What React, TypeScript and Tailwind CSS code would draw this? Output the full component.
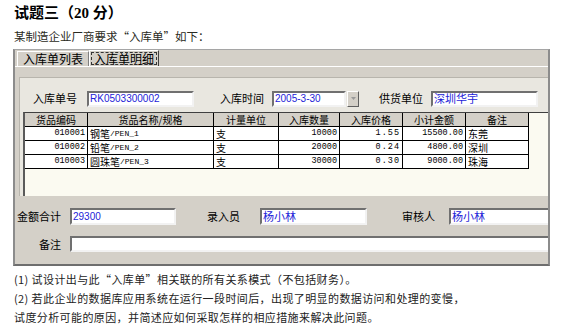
const sans = "font-['Liberation_Sans','Noto_Sans_CJK_SC',sans-serif]";
const cjk = "font-['Noto_Sans_CJK_SC',sans-serif]";
const mono = "font-['Liberation_Mono','Noto_Sans_CJK_SC',monospace]";

const sunken =
  "bg-white border-2 border-t-[#707070] border-l-[#707070] border-r-[#f2f2f2] border-b-[#f2f2f2]";

type Row = {
  code: string;
  nameCn: string;
  nameEn: string;
  unit: string;
  qty: string;
  price: string;
  sum: string;
  note: string;
};

const rows: Row[] = [
  { code: "010001", nameCn: "钢笔", nameEn: "/PEN_1", unit: "支", qty: "10000", price: "1.55", sum: "15500.00", note: "东莞" },
  { code: "010002", nameCn: "铅笔", nameEn: "/PEN_2", unit: "支", qty: "20000", price: "0.24", sum: "4800.00", note: "深圳" },
  { code: "010003", nameCn: "圆珠笔", nameEn: "/PEN_3", unit: "支", qty: "30000", price: "0.30", sum: "9000.00", note: "珠海" },
];

const headers = ["货品编码", "货品名称/规格", "计量单位", "入库数量", "入库价格", "小计金额", "备注"];

function Field({ w, value, cn }: { w: string; value: string; cn?: boolean }) {
  return (
    <div className={`${sunken} ${w} h-[16px] shrink-0 flex items-center px-[1px] overflow-hidden`}>
      <span
        className={`${cn ? `${cjk} text-[11px]` : `${sans} text-[10px]`} leading-none text-[#2323d8] whitespace-nowrap`}
      >
        {value}
      </span>
    </div>
  );
}

export default function App() {
  return (
    <div className={`w-[572px] h-[336px] bg-white overflow-hidden text-black whitespace-nowrap ${cjk}`}>
      {/* heading */}
      <h1 className="pl-[14px] pt-[4px] text-[15px] leading-[18px] font-bold font-['Liberation_Serif','Noto_Sans_CJK_SC',serif]">
        试题三（20 分）
      </h1>
      <p className="pl-[14px] mt-[8px] text-[11.5px] leading-[13px] text-[#2a2a22]">
        某制造企业厂商要求“入库单”如下：
      </p>

      {/* window */}
      <div className="ml-[13px] mt-[6px] w-[537px] h-[217px] bg-[#d4d0c8] border-t border-t-[#a5a5a5] border-x-2 border-x-[#8c8c8c] border-b-2 border-b-[#6e6e6e] overflow-hidden flex flex-col">
        {/* tabs */}
        <div className="h-[16px] flex items-end pl-[2px] shrink-0">
          <div className="h-[15px] shrink-0 px-[5px] border-t border-l border-white border-r border-r-[#808080] text-[12px] leading-[14px] flex items-center">
            入库单列表
          </div>
          <div className="h-[16px] shrink-0 px-[1px] border-t border-l border-white border-r border-r-[#404040] flex items-center">
            <div className="border border-dashed border-[#333] px-[2px] text-[12px] leading-[12px] h-[13px] flex items-center shrink-0">
              入库单明细
            </div>
          </div>
        </div>

        {/* tab page */}
        <div className="border-t border-white pt-[10px] pl-[4px] flex flex-col">
          {/* inner panel */}
          <div className="h-[119px] w-[560px] bg-[#e9e7e0] border-t border-l border-[#b8b5ad] flex flex-col">
            <div className="h-[34px] pt-[7px] flex items-center text-[11px] shrink-0">
              <span className="ml-[13px] w-[45px] shrink-0">入库单号</span>
              <div className="ml-[9px]">
                <Field w="w-[107px]" value="RK0503300002" />
              </div>
              <span className="ml-[26px] w-[46px] shrink-0">入库时间</span>
              <div className="ml-[6px] flex items-center gap-[1px]">
                <Field w="w-[74px]" value="2005-3-30" />
                <div className="w-[12px] h-[16px] bg-[#d4d0c8] border border-t-white border-l-white border-r-[#606060] border-b-[#606060] flex items-center justify-center">
                  <svg width="5" height="3" viewBox="0 0 5 3">
                    <path d="M0 0h5L2.5 3z" fill="#9a9a9a" />
                  </svg>
                </div>
              </div>
              <span className="ml-[20px] w-[46px] shrink-0">供货单位</span>
              <div className="ml-[6px]">
                <Field w="w-[107px]" value="深圳华宇" cn />
              </div>
            </div>

            {/* grid */}
            <div className="ml-[3px] flex-1 bg-[#fbfaf1] border-t border-l-2 border-t-[#404040] border-l-[#5a5a5a]">
              <div className="grid grid-cols-[63px_126px_65px_61px_63px_63px_63px] w-fit">
                {headers.map((h) => (
                  <div
                    key={h}
                    className="h-[14px] bg-[#d4d0c8] border-r border-b border-black flex items-center justify-center text-[10px] leading-none"
                  >
                    {h}
                  </div>
                ))}
                {rows.map((r) => (
                  <div key={r.code} className="contents">
                    <div className={`h-[14px] bg-white border-r border-b border-black flex items-center justify-end pr-[2px] ${mono} text-[8.5px] leading-none`}>
                      {r.code}
                    </div>
                    <div className="h-[14px] bg-white border-r border-b border-black flex items-center pl-[2px] leading-none">
                      <span className="text-[10px]">{r.nameCn}</span>
                      <span className={`${mono} text-[8px]`}>{r.nameEn}</span>
                    </div>
                    <div className="h-[14px] bg-white border-r border-b border-black flex items-center pl-[2px] text-[10px] leading-none">
                      {r.unit}
                    </div>
                    <div className={`h-[14px] bg-white border-r border-b border-black flex items-center justify-end pr-[2px] ${mono} text-[8.5px] leading-none`}>
                      {r.qty}
                    </div>
                    <div className={`h-[14px] bg-white border-r border-b border-black flex items-center justify-end pr-[2px] ${mono} text-[8.5px] leading-none tracking-[1px]`}>
                      {r.price}
                    </div>
                    <div className={`h-[14px] bg-white border-r border-b border-black flex items-center justify-end pr-[2px] ${mono} text-[8.5px] leading-none`}>
                      {r.sum}
                    </div>
                    <div className="h-[14px] bg-white border-r border-b border-black flex items-center pl-[2px] text-[10px] leading-none">
                      {r.note}
                    </div>
                  </div>
                ))}
              </div>
            </div>
          </div>
        </div>

        {/* footer fields */}
        <div className="flex flex-col text-[11px]">
          <div className="mt-[12px] h-[17px] flex items-center">
            <span className="w-[46px] shrink-0 text-right">金额合计</span>
            <div className="ml-[9px]">
              <Field w="w-[106px] h-[17px]" value="29300" />
            </div>
            <span className="ml-[31px] w-[36px] shrink-0">录入员</span>
            <div className="ml-[17px]">
              <Field w="w-[107px] h-[17px]" value="杨小林" cn />
            </div>
            <span className="ml-[35px] w-[36px] shrink-0">审核人</span>
            <div className="ml-[11px]">
              <Field w="w-[107px] h-[17px]" value="杨小林" cn />
            </div>
          </div>
          <div className="mt-[11px] h-[16px] flex items-center">
            <span className="w-[46px] shrink-0 text-right">备注</span>
            <div className={`ml-[9px] ${sunken} w-[480px] h-[16px] shrink-0`} />
          </div>
        </div>
      </div>

      {/* questions */}
      <div className="mt-[4px] pl-[14px] text-[11px] leading-[19px] tracking-[0.4px] text-[#222]">
        <p>(1) 试设计出与此“入库单”相关联的所有关系模式（不包括财务）。</p>
        <p>(2) 若此企业的数据库应用系统在运行一段时间后，出现了明显的数据访问和处理的变慢，</p>
        <p>试度分析可能的原因，并简述应如何采取怎样的相应措施来解决此问题。</p>
      </div>
    </div>
  );
}
